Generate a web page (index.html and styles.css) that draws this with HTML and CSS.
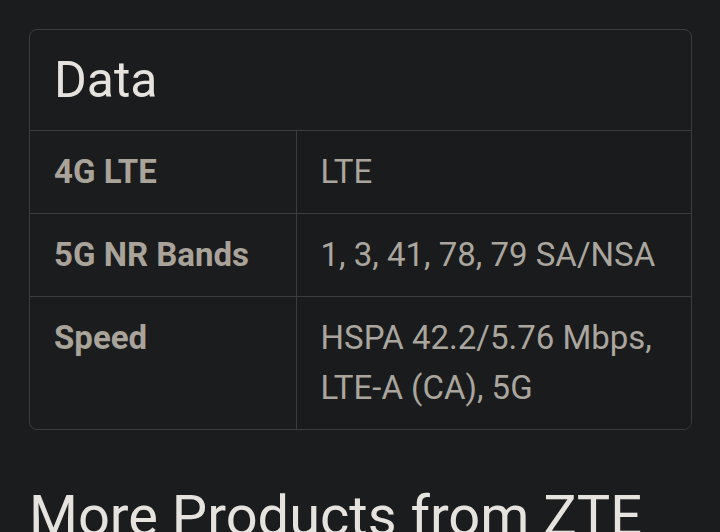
FILE: index.html
```html
<!DOCTYPE html>
<html lang="en">
<head>
<meta charset="utf-8">
<title>Data</title>
<link rel="stylesheet" href="styles.css">
</head>
<body>
<main class="page">
  <section class="card">
    <h2 class="card-title">Data</h2>
    <table class="spec">
      <tbody>
        <tr>
          <th>4G LTE</th>
          <td>LTE</td>
        </tr>
        <tr>
          <th>5G NR Bands</th>
          <td>1, 3, 41, 78, 79 SA/NSA</td>
        </tr>
        <tr>
          <th>Speed</th>
          <td>HSPA 42.2/5.76 Mbps, LTE-A (CA), 5G</td>
        </tr>
      </tbody>
    </table>
  </section>
  <h2 class="section-title">More Products from ZTE</h2>
</main>
</body>
</html>
```

FILE: styles.css
```css
html, body {
  margin: 0;
  padding: 0;
  background: #1b1c1e;
  font-family: Roboto, "Liberation Sans", sans-serif;
}

.page {
  padding: 29px 28px 0 29px;
  overflow: hidden;
  height: 532px;
  box-sizing: border-box;
}

.card {
  border: 1px solid #3a3d40;
  border-radius: 8px;
  overflow: hidden;
  background: #1b1c1e;
}

.card-title {
  margin: 0;
  padding: 20px 24px;
  font-size: 50px;
  line-height: 60px;
  font-weight: 400;
  color: #e6e3df;
  border-bottom: 1px solid #3a3d40;
}

.spec {
  width: 100%;
  border-collapse: collapse;
  table-layout: fixed;
}

.spec th,
.spec td {
  padding: 16px 24px;
  font-size: 33px;
  line-height: 50px;
  text-align: left;
  vertical-align: top;
  color: #a9a399;
}

.spec th {
  width: 266px;
  box-sizing: border-box;
  font-weight: 700;
  border-right: 1px solid #3a3d40;
}

.spec td {
  font-weight: 400;
  color: #aaa69e;
  background: #1a1b1d;
}

.spec tr + tr th,
.spec tr + tr td {
  border-top: 1px solid #3a3d40;
}

.section-title {
  margin: 53px 0 0 0;
  font-size: 56px;
  line-height: 67px;
  font-weight: 400;
  color: #e6e3df;
  white-space: nowrap;
}
```
